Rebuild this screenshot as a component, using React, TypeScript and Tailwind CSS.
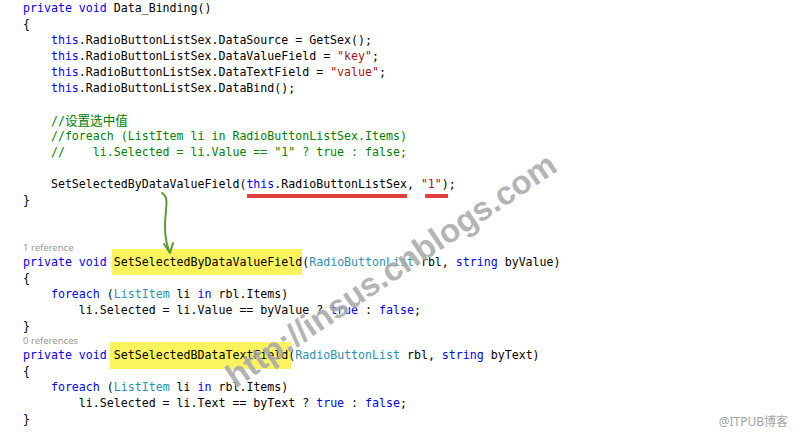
import type { ReactNode } from "react";

const K = ({ children }: { children: ReactNode }) => (
  <span className="text-[#0000ff]">{children}</span>
);
const T = ({ children }: { children: ReactNode }) => (
  <span className="text-[#2b91af]">{children}</span>
);
const S = ({ children }: { children: ReactNode }) => (
  <span className="text-[#a31515]">{children}</span>
);

const Line = ({ children }: { children?: ReactNode }) => (
  <div className="h-[16px] leading-[16px] whitespace-pre">{children}</div>
);

const Lens = ({ text }: { text: string }) => (
  <div className="h-[13px] leading-[13px] text-[9.5px] text-[#9a9a9a] font-['Noto_Sans',sans-serif]">
    {text}
  </div>
);

const App = () => {
  return (
    <div className="relative w-[799px] h-[439px] overflow-hidden bg-white text-black">
      <div className="pl-[23px] text-[11.6px] font-['DejaVu_Sans_Mono','Liberation_Mono',monospace]">
        <Line>
          <K>private</K> <K>void</K> Data_Binding()
        </Line>
        <Line>{"{"}</Line>
        <Line>
          {"    "}
          <K>this</K>.RadioButtonListSex.DataSource = GetSex();
        </Line>
        <Line>
          {"    "}
          <K>this</K>.RadioButtonListSex.DataValueField = <S>"key"</S>;
        </Line>
        <Line>
          {"    "}
          <K>this</K>.RadioButtonListSex.DataTextField = <S>"value"</S>;
        </Line>
        <Line>
          {"    "}
          <K>this</K>.RadioButtonListSex.DataBind();
        </Line>
        <Line />
        <Line>
          <span className="text-[#008000]">
            {"    //"}
            <span className="text-[12.6px] font-['Noto_Sans_CJK_SC',sans-serif]">设置选中值</span>
          </span>
        </Line>
        <Line>
          <span className="text-[#008000]">{"    //foreach (ListItem li in RadioButtonListSex.Items)"}</span>
        </Line>
        <Line>
          <span className="text-[#008000]">{'    //    li.Selected = li.Value == "1" ? true : false;'}</span>
        </Line>
        <Line />
        <Line>
          {"    "}SetSelectedByDataValueField(<K>this</K>.RadioButtonListSex, <S>"1"</S>);
        </Line>
        <Line>{"}"}</Line>

        <div className="h-[33px]" />

        <Lens text="1 reference" />
        <Line>
          <K>private</K> <K>void</K>{" "}
          <span className="bg-[#fbf45c] pl-[2px] -ml-[2px] py-[6px]">SetSelectedByDataValueField</span>(
          <T>RadioButtonList</T> rbl, <K>string</K> byValue)
        </Line>
        <Line>{"{"}</Line>
        <Line>
          {"    "}
          <K>foreach</K> (<T>ListItem</T> li <K>in</K> rbl.Items)
        </Line>
        <Line>
          {"        li.Selected = li.Value == byValue ? "}
          <K>true</K> : <K>false</K>;
        </Line>
        <Line>{"}"}</Line>

        <Lens text="0 references" />
        <Line>
          <K>private</K> <K>void</K>{" "}
          <span className="bg-[#fbf45c] pl-[4px] pr-[3px] -ml-[4px] -mr-[3px] pt-[6px] pb-[7px]">
            SetSelectedBDataTextField
          </span>
          (<T>RadioButtonList</T> rbl, <K>string</K> byText)
        </Line>
        <Line>{"{"}</Line>
        <Line>
          {"    "}
          <K>foreach</K> (<T>ListItem</T> li <K>in</K> rbl.Items)
        </Line>
        <Line>
          {"        li.Selected = li.Text == byText ? "}
          <K>true</K> : <K>false</K>;
        </Line>
        <Line>{"}"}</Line>
      </div>

      {/* red marks */}
      <div className="absolute left-[247px] top-[194px] w-[160px] h-[4px] bg-[#e2403f]" />
      <div className="absolute left-[425px] top-[194px] w-[23px] h-[4px] bg-[#e2403f]" />

      {/* green arrow */}
      <svg className="absolute left-0 top-0" width="799" height="439" fill="none">
        <path
          d="M162 193 C167 196, 167 201, 166 210 C164 226, 164 238, 169 251"
          stroke="#5a9b35"
          strokeWidth="2"
          strokeLinecap="round"
        />
        <path
          d="M164 244 L170 253 L173 243"
          stroke="#5a9b35"
          strokeWidth="2"
          strokeLinecap="round"
          strokeLinejoin="round"
        />
      </svg>

      {/* watermark */}
      <div className="absolute left-[391px] top-[270px] -translate-x-1/2 -translate-y-1/2 -rotate-[34deg] whitespace-nowrap text-[33px] font-bold font-['Liberation_Sans',Arial,sans-serif] text-[#727272]/55 [text-shadow:0_0_1px_rgba(255,255,255,0.7)]">
        http://insus.cnblogs.com
      </div>

      <div className="absolute right-[11px] bottom-[8px] text-[12px] text-[#a3a3a3] font-['Noto_Sans','Noto_Sans_CJK_SC',sans-serif]">
        @ITPUB博客
      </div>
    </div>
  );
};

export default App;
